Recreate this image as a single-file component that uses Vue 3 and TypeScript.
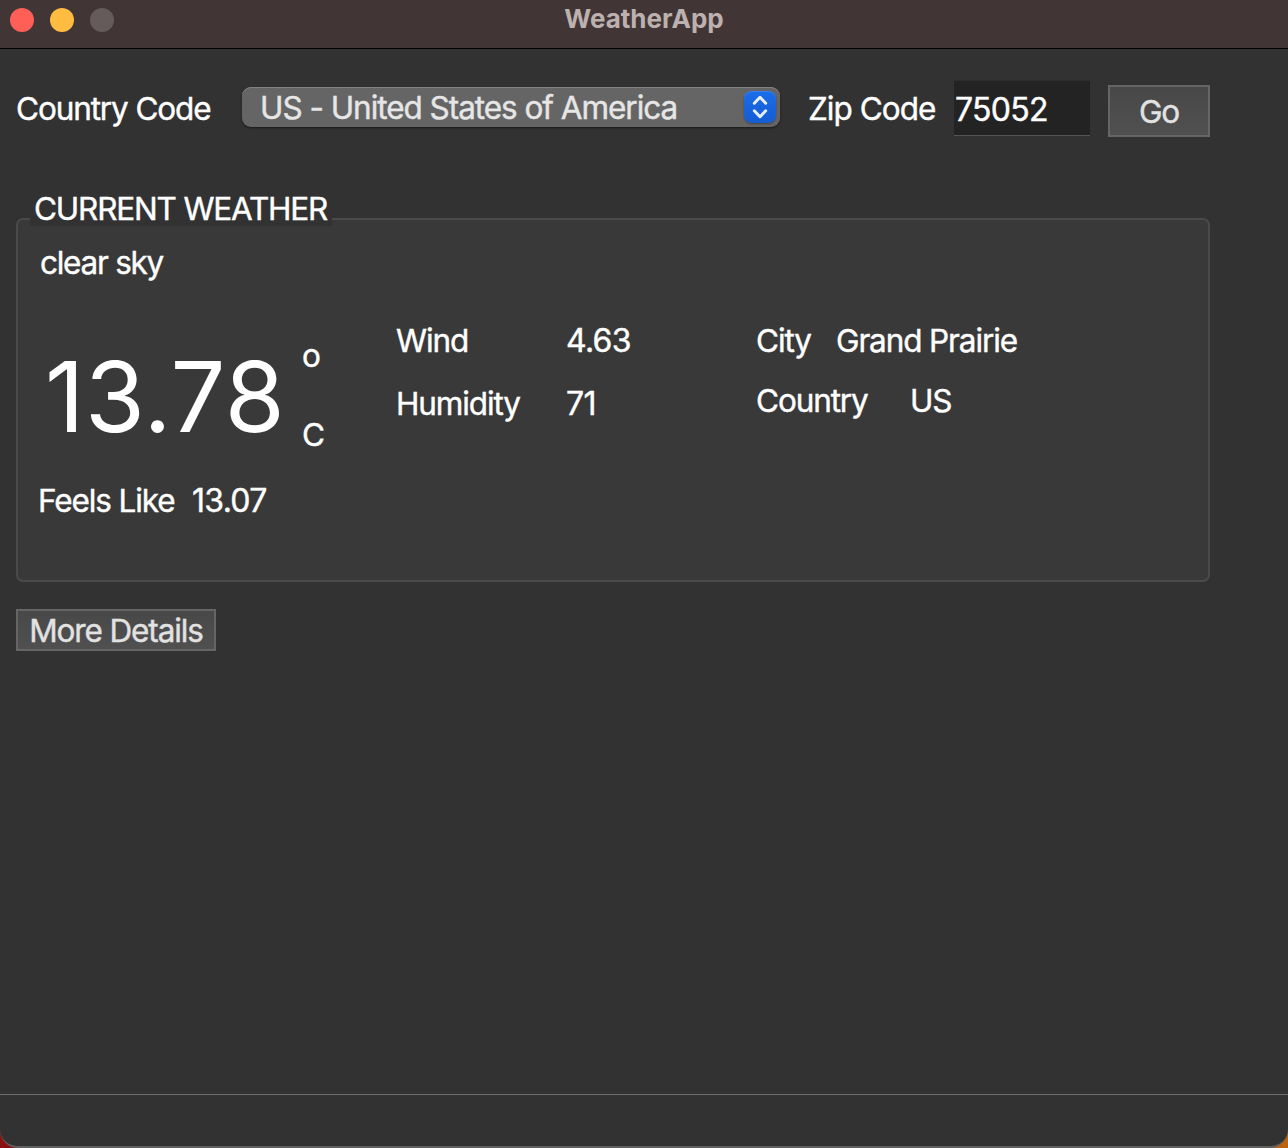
<script setup lang="ts">
import { ref } from 'vue'

const country = ref('US - United States of America')
const zip = ref('75052')

const weather = {
  summary: 'clear sky',
  temperature: '13.78',
  feelsLike: '13.07',
  wind: '4.63',
  humidity: '71',
  city: 'Grand Prairie',
  country: 'US',
}
</script>

<template>
  <div class="desktop">
    <main class="window">
      <header class="titlebar">
        <div class="lights">
          <i class="light close"></i>
          <i class="light minimize"></i>
          <i class="light zoom"></i>
        </div>
        <h1 class="title">WeatherApp</h1>
      </header>

      <div class="content">
        <div class="search">
          <label class="country-label">Country Code</label>
          <div class="select">
            <span class="select-text">{{ country }}</span>
            <span class="stepper">
              <svg width="32" height="32" viewBox="0 0 32 32" fill="none" stroke="#e6eefb" stroke-width="3" stroke-linecap="round" stroke-linejoin="round">
                <path d="M10.3 12.2 16 6.3l5.7 5.9M10.3 19.8l5.7 5.9 5.7-5.9" />
              </svg>
            </span>
          </div>
          <label class="zip-label">Zip Code</label>
          <div class="zip num">{{ zip }}</div>
          <button class="btn go">Go</button>
        </div>

        <section class="panel">
          <h2 class="legend"><span>CURRENT WEATHER</span></h2>
          <div class="summary">{{ weather.summary }}</div>
          <div class="readings">
            <div class="temp-col">
              <div class="temp-row">
                <span class="temp">{{ weather.temperature }}</span>
                <span class="unit">
                  <span class="degree">o</span>
                  <span class="scale">C</span>
                </span>
              </div>
              <div class="feels">
                <span class="feels-label">Feels Like</span>
                <span class="num">{{ weather.feelsLike }}</span>
              </div>
            </div>
            <div class="air-col">
              <div class="pair"><span class="key">Wind</span><span class="num">{{ weather.wind }}</span></div>
              <div class="pair"><span class="key">Humidity</span><span class="num">{{ weather.humidity }}</span></div>
            </div>
            <div class="place-col">
              <div class="pair"><span class="city-key">City</span><span>{{ weather.city }}</span></div>
              <div class="pair"><span class="nation-key">Country</span><span>{{ weather.country }}</span></div>
            </div>
          </div>
        </section>

        <button class="btn details">More Details</button>
      </div>

      <footer class="statusbar"></footer>
    </main>
  </div>
</template>

<style>
body {
  margin: 0;
  background: #323232;
}
</style>

<style scoped>
.desktop {
  width: 1288px;
  height: 1148px;
  overflow: hidden;
  background: linear-gradient(90deg, #8c1010 0 50%, #c0630c 50%);
}
.window {
  box-sizing: border-box;
  width: 1288px;
  height: 1148px;
  display: flex;
  flex-direction: column;
  background: #323232;
  border-bottom: 2px solid #606060;
  border-radius: 0 0 18px 18px;
  overflow: hidden;
  color: #fff;
  font: 400 31.5px/40px Inter, "Liberation Sans", sans-serif;
  letter-spacing: -1.12px;
  white-space: nowrap;
  -webkit-text-stroke: 0.4px currentColor;
}
.titlebar {
  box-sizing: border-box;
  height: 49px;
  flex: none;
  display: grid;
  grid-template-columns: 1fr auto 1fr;
  align-items: start;
  background: #413635;
  border-bottom: 1px solid #000;
}
.lights {
  display: flex;
  gap: 16px;
  padding: 8px 0 0 10px;
}
.light {
  width: 24px;
  height: 24px;
  border-radius: 50%;
}
.close { background: #ff5f57; }
.minimize { background: #febc40; }
.zoom { background: #655b5a; }
.title {
  margin: 3px 0 0;
  font-size: 26px;
  line-height: 32px;
  font-weight: 700;
  letter-spacing: 0;
  color: #bdb1b0;
  -webkit-text-stroke: 0;
}
.num {
  font-size: 32px;
  letter-spacing: -0.7px;
}
.content {
  flex: 1;
  padding: 31px 16px 0;
}
.search {
  display: flex;
  align-items: flex-start;
  height: 58px;
}
.country-label {
  width: 226px;
  margin-top: 9px;
}
.select {
  box-sizing: border-box;
  width: 538px;
  height: 40px;
  margin-top: 7px;
  padding: 0 4px 0 18px;
  display: flex;
  align-items: center;
  justify-content: space-between;
  border-radius: 9px;
  background: #656565;
  box-shadow: inset 0 1px 0 #828282, 0 1px 2px rgba(0, 0, 0, 0.5);
  color: #e6e6e6;
}
.select-text {
  padding-top: 2px;
  letter-spacing: -1.04px;
}
.stepper {
  width: 32px;
  height: 32px;
  display: flex;
  border-radius: 8px;
  background: linear-gradient(#1b6dea, #155cd2);
  box-shadow: inset 0 1px 0 #3b80ec, 0 1px 2px rgba(0, 0, 0, 0.35);
}
.zip-label {
  width: 146px;
  margin: 9px 0 0 28px;
  letter-spacing: -0.95px;
}
.zip {
  box-sizing: border-box;
  width: 136px;
  height: 56px;
  padding: 9px 0 0 1px;
  background: #232323;
  border: 0 solid #2d2d2d;
  border-width: 1px 0;
  border-bottom-color: #555;
}
.btn {
  box-sizing: border-box;
  display: block;
  margin: 0;
  padding: 0;
  border: 2px solid #656565;
  border-radius: 0;
  background: linear-gradient(#484848, #505050);
  color: #e2e2e2;
  font: inherit;
  letter-spacing: inherit;
}
.go {
  width: 102px;
  height: 52px;
  margin: 5px 0 0 18px;
  padding-top: 2px;
}
.panel {
  box-sizing: border-box;
  width: 1194px;
  height: 364px;
  margin-top: 80px;
  border: 2px solid #4a4a4a;
  border-radius: 7px;
  background: #393939;
}
.legend {
  width: 302px;
  height: 37px;
  margin: -31px 0 0 12px;
  background: #323232;
  font: inherit;
  letter-spacing: -1.18px;
}
.legend span {
  display: block;
  padding-left: 4px;
}
.summary {
  margin: 17px 0 0 22px;
  letter-spacing: -1.25px;
}
.readings {
  display: grid;
  grid-template-columns: 358px 360px 1fr;
  margin: 38px 0 0 20px;
}
.temp-row {
  display: flex;
  height: 160px;
}
.temp {
  box-sizing: border-box;
  width: 264px;
  padding-left: 7px;
  font-size: 97px;
  line-height: 120px;
  letter-spacing: 0.6px;
  margin-top: 16px;
  -webkit-text-stroke: 0;
}
.unit {
  display: flex;
  flex-direction: column;
  padding-top: 15px;
  gap: 39px;
}
.feels {
  display: flex;
}
.feels-label {
  width: 154px;
}
.pair {
  display: flex;
}
.air-col .pair + .pair { margin-top: 23px; }
.place-col .pair + .pair { margin-top: 20px; }
.key { width: 170px; }
.city-key { width: 80px; }
.nation-key { width: 154px; }
.details {
  width: 200px;
  height: 42px;
  margin-top: 27px;
}
.statusbar {
  box-sizing: border-box;
  height: 52px;
  flex: none;
  border-top: 1px solid #6b6f6c;
}
</style>
